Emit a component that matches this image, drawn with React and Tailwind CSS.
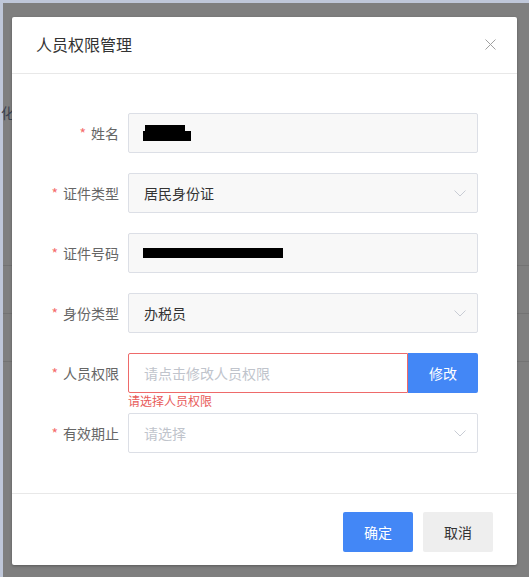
import React from 'react';

const Chevron = () => (
  <svg width="12" height="7" viewBox="0 0 12 7" fill="none" className="shrink-0">
    <path d="M0.5 0.5 L6 6 L11.5 0.5" stroke="#c8ccd4" strokeWidth="1" />
  </svg>
);

const Label = ({ children }) => (
  <div className="w-[116px] shrink-0 pr-[9px] text-right text-[14px] leading-[20px] text-[#666]">
    <span className="mr-[5px] text-[#f56c6c]">*</span>
    {children}
  </div>
);

const Row = ({ label, children, className = 'mb-[20px]' }) => (
  <div className={`flex h-[40px] items-center ${className}`}>
    <Label>{label}</Label>
    {children}
  </div>
);

const App = () => {
  return (
    <div className="h-[577px] w-[529px] overflow-hidden bg-[#bfc7d9] pl-[3px] pt-[3px] font-['Noto_Sans_CJK_SC',sans-serif]">
      <div className="relative h-full bg-[#7f7f7f] pl-[9px] pt-[14px]">
        {/* page content seen through the mask */}
        <span className="absolute left-[-2px] top-[99px] text-[14px] text-[#3b4252]">化</span>
        <div className="absolute left-0 right-0 top-[262px] h-px bg-[#737373]" />
        <div className="absolute left-0 right-0 top-[310px] h-px bg-[#737373]" />
        <div className="absolute left-0 right-0 top-[358px] h-px bg-[#737373]" />

        <div className="relative flex h-[548px] w-[505px] flex-col rounded-[2px] bg-white shadow-[0_1px_3px_rgba(0,0,0,0.3)]">
          <div className="flex h-[57px] shrink-0 items-center justify-between border-b border-[#e8e8e8] pb-[2px] pl-[24px] pr-[21px]">
            <span className="text-[16px] text-[#333]">人员权限管理</span>
            <svg width="11" height="11" viewBox="0 0 11 11" fill="none">
              <path d="M0.5 0.5 L10.5 10.5 M10.5 0.5 L0.5 10.5" stroke="#a0a0a0" strokeWidth="1" />
            </svg>
          </div>

          <div className="flex-1 pt-[39px]">
            <Row label="姓名">
              <div className="flex h-[40px] w-[350px] items-center rounded-[2px] border border-[#dcdfe6] bg-[#f8f8f8] pl-[14px]">
                <div className="flex flex-col items-start">
                  <div className="ml-[2px] h-[6px] w-[40px] bg-black" />
                  <div className="h-[10px] w-[48px] bg-black" />
                </div>
              </div>
            </Row>
            <Row label="证件类型">
              <div className="flex h-[40px] w-[350px] items-center justify-between rounded-[2px] border border-[#dcdfe6] bg-[#f8f8f8] pl-[15px] pr-[11px] text-[14px] text-[#333]">
                <span>居民身份证</span>
                <Chevron />
              </div>
            </Row>
            <Row label="证件号码">
              <div className="flex h-[40px] w-[350px] items-center rounded-[2px] border border-[#dcdfe6] bg-[#f8f8f8] pl-[14px]">
                <div className="h-[10px] w-[140px] bg-black" />
              </div>
            </Row>
            <Row label="身份类型">
              <div className="flex h-[40px] w-[350px] items-center justify-between rounded-[2px] border border-[#dcdfe6] bg-[#f8f8f8] pl-[15px] pr-[11px] text-[14px] text-[#333]">
                <span>办税员</span>
                <Chevron />
              </div>
            </Row>
            <Row label="人员权限" className="">
              <div className="flex h-[40px] w-[350px]">
                <div className="flex h-full flex-1 items-center rounded-l-[2px] border border-[#ee6a6a] bg-white pl-[15px] text-[14px] text-[#c0c4cc]">
                  请点击修改人员权限
                </div>
                <div className="flex h-full w-[70px] items-center justify-center rounded-r-[2px] bg-[#4387f6] text-[14px] text-white">
                  修改
                </div>
              </div>
            </Row>
            <div className="h-[20px] pl-[116px] text-[12px] leading-[15px] text-[#e85a5a]">请选择人员权限</div>
            <Row label="有效期止" className="">
              <div className="flex h-[40px] w-[350px] items-center justify-between rounded-[2px] border border-[#dcdfe6] bg-white pl-[15px] pr-[11px] text-[14px] text-[#c0c4cc]">
                <span>请选择</span>
                <Chevron />
              </div>
            </Row>
          </div>

          <div className="flex h-[72px] shrink-0 justify-end gap-[10px] border-t border-[#e8e8e8] pr-[24px] pt-[18px]">
            <button className="h-[40px] w-[70px] rounded-[2px] bg-[#4387f6] text-[14px] text-white">确定</button>
            <button className="h-[40px] w-[70px] rounded-[2px] bg-[#eeeeee] text-[14px] text-[#333]">取消</button>
          </div>
        </div>
      </div>
    </div>
  );
};

export default App;
